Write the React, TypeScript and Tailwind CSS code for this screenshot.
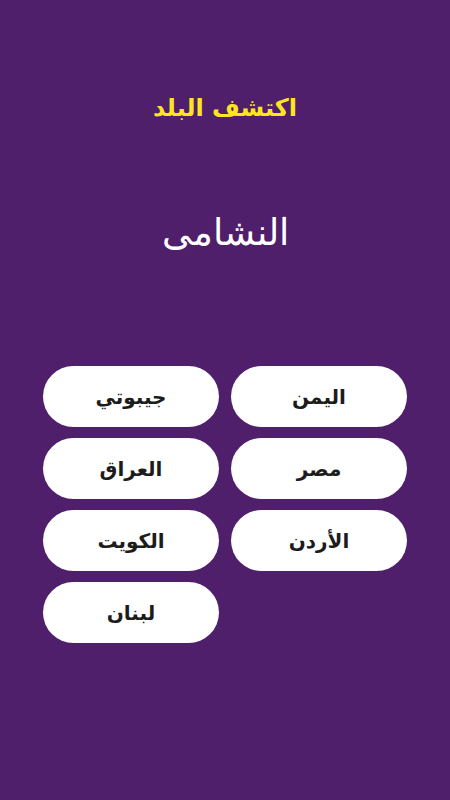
import React from "react";

const columns = [
  ["اليمن", "مصر", "الأردن"],
  ["جيبوتي", "العراق", "الكويت", "لبنان"],
];

export default function App() {
  return (
    <div
      dir="rtl"
      className="w-[450px] h-[800px] bg-[#4f1f6c] flex flex-col items-center overflow-hidden"
      style={{ fontFamily: '"DejaVu Sans", "Noto Sans", sans-serif' }}
    >
      <h1 className="mt-[90px] h-[36px] text-[24px] leading-[36px] font-bold text-[#ffe61c]">
        اكتشف البلد
      </h1>
      <p className="mt-[83px] h-[48px] text-[37px] leading-[48px] font-light text-white">
        النشامى
      </p>
      <div className="mt-[109px] w-[364px] flex gap-x-[12px]">
        {columns.map((col, i) => (
          <div key={i} className="flex-1 flex flex-col gap-y-[11px]">
            {col.map((name) => (
              <button
                key={name}
                type="button"
                className="h-[61px] rounded-full bg-white text-[20px] font-bold text-[#1c1c1c]"
              >
                {name}
              </button>
            ))}
          </div>
        ))}
      </div>
    </div>
  );
}
